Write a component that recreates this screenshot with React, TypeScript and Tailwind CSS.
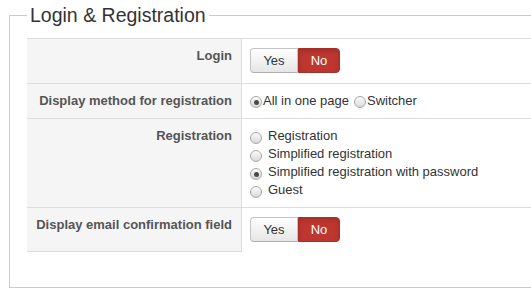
import React from 'react';

const Radio: React.FC<{ checked?: boolean; className?: string }> = ({ checked, className = '' }) => (
  <span
    className={`flex h-[12px] w-[12px] shrink-0 items-center justify-center rounded-full border border-[#a8a8a8] bg-linear-to-b from-[#fbfbfb] to-[#dadada] ${className}`}
  >
    {checked && <span className="h-[5px] w-[5px] rounded-full bg-[#4a4a4a]" />}
  </span>
);

const YesNo: React.FC = () => (
  <div className="flex h-[25px] text-[13px] leading-[18px]">
    <span className="flex w-[48px] items-center justify-center rounded-l-[4px] border border-[#c4c4c4] border-b-[#b0b0b0] bg-linear-to-b from-white to-[#e6e6e6] text-[#333]">
      Yes
    </span>
    <span className="flex w-[42px] items-center justify-center rounded-r-[4px] border border-[#a8302a] bg-[#bd362f] text-white shadow-[inset_0_2px_4px_rgba(0,0,0,0.15)]">
      No
    </span>
  </div>
);

const Row: React.FC<{ label: string; last?: boolean; children: React.ReactNode; buttons?: boolean }> = ({
  label,
  last,
  children,
  buttons,
}) => (
  <div className="flex border-t border-[#dddddd]">
    <div
      className={`w-[215px] shrink-0 border-r border-[#dddddd] bg-[#f5f5f5] pt-2 pb-2 pr-[9px] text-right text-[13px] leading-[18px] font-bold text-[#555] ${
        last ? 'border-b' : ''
      }`}
    >
      {label}
    </div>
    <div className={`flex-1 px-2 ${buttons ? 'pt-[9px] pb-[10px]' : 'py-2'}`}>{children}</div>
  </div>
);

export default function App() {
  const regOptions = [
    'Registration',
    'Simplified registration',
    'Simplified registration with password',
    'Guest',
  ];

  return (
    <div className="h-[298px] w-[531px] overflow-hidden bg-white font-['Liberation_Sans',Arial,sans-serif]">
      <fieldset className="ml-[9px] w-[560px] border border-[#cccccc] pt-2 pr-0 pb-[35px] pl-[17px]">
        <legend className="px-[3px] text-[19.5px] leading-[30px] text-[#333]">Login &amp; Registration</legend>

        <Row label="Login" buttons>
          <YesNo />
        </Row>

        <Row label="Display method for registration">
          <div className="flex items-start text-[13px] leading-[18px] text-[#333]">
            <Radio checked className="mt-[4px]" />
            <span className="ml-[1px]">All in one page</span>
            <Radio className="mt-[4px] ml-[5px]" />
            <span className="ml-[1px]">Switcher</span>
          </div>
        </Row>

        <Row label="Registration">
          <div className="flex flex-col text-[13px] leading-[18px] text-[#333]">
            {regOptions.map((opt, i) => (
              <div key={opt} className="flex items-start">
                <Radio checked={i === 2} className="mt-[5px]" />
                <span className="ml-[6px]">{opt}</span>
              </div>
            ))}
          </div>
        </Row>

        <Row label="Display email confirmation field" buttons last>
          <YesNo />
        </Row>
      </fieldset>
    </div>
  );
}
